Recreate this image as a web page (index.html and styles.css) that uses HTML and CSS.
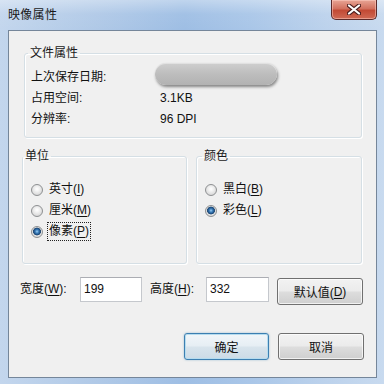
FILE: index.html
```html
<!DOCTYPE html>
<html lang="zh-CN">
<head>
<meta charset="utf-8">
<title>映像属性</title>
<link rel="stylesheet" href="styles.css">
</head>
<body>
<div class="window">
  <div class="titlebar">
    <span class="title">映像属性</span>
    <div class="close">
      <svg width="14" height="11" viewBox="0 0 14 11">
        <path d="M2 1.5 L12 9.5 M12 1.5 L2 9.5" stroke="#4a1c1c" stroke-width="4.2" stroke-linecap="round"/>
        <path d="M2 1.5 L12 9.5 M12 1.5 L2 9.5" stroke="#ffffff" stroke-width="2.2" stroke-linecap="round"/>
      </svg>
    </div>
  </div>
  <div class="client">
    <fieldset class="group file">
      <legend>文件属性</legend>
      <div class="prop"><span>上次保存日期:</span><span class="pill"></span></div>
      <div class="prop"><span>占用空间:</span><span>3.1KB</span></div>
      <div class="prop"><span>分辨率:</span><span>96 DPI</span></div>
    </fieldset>
    <div class="groups">
      <fieldset class="group unit">
        <legend>单位</legend>
        <div class="radio-row"><span class="radio"></span><span class="rlabel">英寸(<u>I</u>)</span></div>
        <div class="radio-row"><span class="radio"></span><span class="rlabel">厘米(<u>M</u>)</span></div>
        <div class="radio-row"><span class="radio checked"></span><span class="rlabel focus">像素(<u>P</u>)</span></div>
      </fieldset>
      <fieldset class="group color">
        <legend>颜色</legend>
        <div class="radio-row"><span class="radio"></span><span class="rlabel">黑白(<u>B</u>)</span></div>
        <div class="radio-row"><span class="radio checked"></span><span class="rlabel">彩色(<u>L</u>)</span></div>
      </fieldset>
    </div>
    <div class="size-row">
      <span class="flabel w">宽度(<u>W</u>):</span>
      <div class="field w">199</div>
      <span class="flabel h">高度(<u>H</u>):</span>
      <div class="field h">332</div>
      <div class="btn default">默认值(<u>D</u>)</div>
    </div>
    <div class="actions">
      <div class="btn ok">确定</div>
      <div class="btn cancel">取消</div>
    </div>
  </div>
</div>
</body>
</html>
```

FILE: styles.css
```css
html, body {
  margin: 0;
  padding: 0;
}
body {
  width: 384px;
  height: 384px;
  overflow: hidden;
  font-family: "Liberation Sans", "Noto Sans CJK SC", sans-serif;
  font-size: 12px;
  color: #111;
}
.window {
  width: 384px;
  height: 384px;
  box-sizing: border-box;
  display: flex;
  flex-direction: column;
  background:
    linear-gradient(to bottom, rgba(255,255,255,0.35) 0, rgba(255,255,255,0.05) 14px, rgba(255,255,255,0) 30px),
    linear-gradient(to right, #c3d6ed 0%, #b0c9e7 25%, #9ebee4 48%, #a9c6e8 65%, #bcd2ec 85%, #c8daef 100%);
}
.titlebar {
  height: 30px;
  flex: none;
  display: flex;
  justify-content: space-between;
  align-items: flex-start;
}
.title {
  padding-left: 8px;
  line-height: 30px;
  font-size: 12px;
  color: #1a1a1a;
  letter-spacing: 0.3px;
}
.close {
  width: 46px;
  height: 20px;
  margin-right: 7px;
  box-sizing: border-box;
  border: 1px solid #5b2a2a;
  border-top: none;
  border-radius: 0 0 5px 5px;
  background: linear-gradient(to bottom, #e8a595 0%, #d2715f 45%, #c24a35 55%, #d06a55 100%);
  box-shadow: inset 0 0 0 1px rgba(255,210,200,0.5);
  display: flex;
  align-items: center;
  justify-content: center;
}
.client {
  flex: 1;
  margin: 0 7px 6px 8px;
  border: 1px solid #75869a;
  background: #f0f0f0;
  display: flex;
  flex-direction: column;
}
.group {
  margin: 0;
  border: 1px solid #d5dfe5;
  border-radius: 3px;
  box-shadow: inset 1px 1px 0 #fff, 1px 1px 0 #fff;
  min-width: 0;
}
.group legend {
  padding: 0 2px;
  line-height: 16px;
  font-size: 12px;
  color: #1a1a1a;
}
.file {
  margin: 14px 14px 0 15px;
  padding: 6px 6px 7px 6px;
}
.file legend {
  margin-left: -3px;
}
.prop {
  display: grid;
  grid-template-columns: 129px auto;
  height: 21px;
  line-height: 21px;
}
.pill {
  align-self: start;
  width: 122px;
  height: 22px;
  margin-left: -5px;
  margin-top: -4px;
  border-radius: 11px;
  background: linear-gradient(to bottom, #cfcfcf 0%, #bdbdbd 50%, #b2b2b2 100%);
  box-shadow: 1px 2px 3px rgba(0,0,0,0.45), inset 0 1px 0 rgba(255,255,255,0.4);
}
.groups {
  display: flex;
  gap: 9px;
  margin: 10px 0 0 13px;
}
.unit, .color {
  padding: 15px 8px 21px 8px;
}
.unit {
  width: 165px;
  box-sizing: border-box;
}
.color {
  width: 166px;
  box-sizing: border-box;
}
.unit legend {
  margin-left: -8px;
}
.color legend {
  margin-left: -3px;
}
.radio-row {
  height: 21px;
  display: flex;
  align-items: center;
  gap: 4px;
}
.radio {
  width: 12px;
  height: 12px;
  box-sizing: border-box;
  border-radius: 50%;
  border: 1px solid #8e9092;
  background: radial-gradient(circle at 50% 40%, #ffffff 0, #f4f4f4 2px, #d8d8d8 6px);
  flex: none;
}
.radio.checked {
  background: radial-gradient(circle at 50% 45%, #9fd0f2 0, #3f82bf 1.6px, #1d4d80 3.2px, #2a4f75 3.7px, #e6e6e6 4.2px, #d4d4d4 6px);
}
.rlabel {
  line-height: 17px;
  padding: 0 1px;
  border: 1px dotted transparent;
}
.rlabel.focus {
  border-color: #222;
}
u {
  text-decoration-thickness: 1px;
  text-underline-offset: 2px;
}
.size-row {
  display: flex;
  align-items: flex-start;
  margin-top: 13px;
  padding-left: 11px;
}
.flabel {
  line-height: 25px;
}
.flabel.w {
  width: 60px;
}
.flabel.h {
  width: 56px;
  margin-left: 8px;
}
.field {
  height: 25px;
  box-sizing: border-box;
  border: 1px solid #c5c8cd;
  border-top-color: #abadb3;
  background: #fff;
  line-height: 23px;
  padding-left: 3px;
}
.field.w {
  width: 62px;
}
.field.h {
  width: 63px;
}
.btn {
  height: 27px;
  box-sizing: border-box;
  border: 1px solid #707070;
  border-radius: 3px;
  background: linear-gradient(to bottom, #f2f2f2 0%, #ebebeb 48%, #dddddd 52%, #cfcfcf 100%);
  box-shadow: inset 0 0 0 1px rgba(255,255,255,0.7);
  display: flex;
  align-items: center;
  justify-content: center;
  color: #111;
}
.btn.default {
  width: 86px;
  margin-left: 8px;
  margin-top: 1px;
}
.actions {
  display: flex;
  justify-content: flex-end;
  gap: 9px;
  margin-top: 28px;
  padding-right: 12px;
}
.btn.ok {
  width: 85px;
  border-color: #3c7fb1;
  background: linear-gradient(to bottom, #f1f6f9 0%, #e6eef4 48%, #d8e4ec 52%, #ccdbe6 100%);
  box-shadow: inset 0 0 0 1px #b6dcef, 0 0 2px rgba(60,127,177,0.5);
}
.btn.cancel {
  width: 86px;
}
```
